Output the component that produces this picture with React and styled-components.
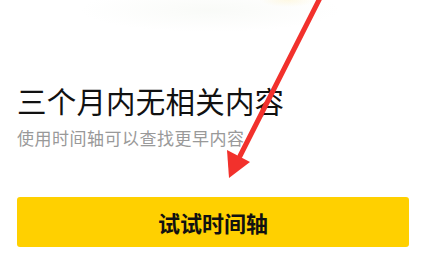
import styled, { createGlobalStyle } from 'styled-components';

const GlobalStyle = createGlobalStyle`
  html, body {
    margin: 0;
    padding: 0;
    background: #ffffff;
  }
  body {
    font-family: 'Noto Sans CJK SC', 'Noto Sans', sans-serif;
  }
`;

const StyledPage = styled.div`
  position: relative;
  width: 426px;
  height: 268px;
  overflow: hidden;
  background: #fff;
`;

const StyledIllustration = styled.div`
  height: 80px;
  background:
    radial-gradient(ellipse 28px 7px at 288px 0px, rgba(255, 240, 190, 0.4), rgba(255, 255, 255, 0) 100%),
    radial-gradient(ellipse 130px 22px at 210px 10px, rgba(238, 242, 234, 0.35), rgba(255, 255, 255, 0) 100%);
`;

const StyledContent = styled.div`
  display: flex;
  flex-direction: column;
  padding: 0 17px;
`;

const StyledTitle = styled.h1`
  margin: 0;
  font-size: 29.5px;
  font-weight: 400;
  line-height: 40px;
  color: #111;
  letter-spacing: 0.2px;
`;

const StyledSubtitle = styled.p`
  margin: 6px 0 0;
  font-size: 17px;
  line-height: 24px;
  color: #999;
  letter-spacing: 0.5px;
`;

const StyledButton = styled.button`
  margin-top: 47px;
  height: 50px;
  width: 100%;
  border: none;
  border-radius: 3px;
  background: #ffd000;
  color: #111;
  font-family: 'Noto Sans CJK SC', 'Noto Sans', sans-serif;
  font-size: 22px;
  font-weight: 700;
  cursor: pointer;
`;

const StyledArrow = styled.svg`
  position: absolute;
  left: 0;
  top: 0;
  pointer-events: none;
`;

function App() {
  return (
    <StyledPage>
      <GlobalStyle />
      <StyledIllustration />
      <StyledContent>
        <StyledTitle>三个月内无相关内容</StyledTitle>
        <StyledSubtitle>使用时间轴可以查找更早内容</StyledSubtitle>
        <StyledButton>试试时间轴</StyledButton>
      </StyledContent>
      <StyledArrow width="426" height="268" viewBox="0 0 426 268">
        <line x1="320" y1="-2" x2="240" y2="156" stroke="#f2312c" strokeWidth="5" strokeLinecap="round" />
        <polygon points="227,150 250,162 229,178" fill="#f2312c" />
      </StyledArrow>
    </StyledPage>
  );
}

export default App;
